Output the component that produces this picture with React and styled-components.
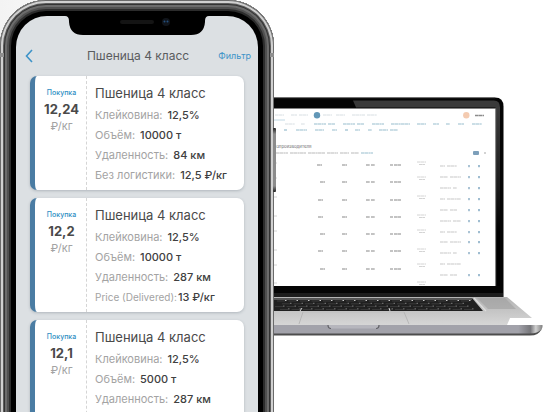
import React from "react";
import styled, { createGlobalStyle } from "styled-components";

const GlobalStyle = createGlobalStyle`
  * { box-sizing: border-box; }
  body {
    margin: 0;
    background: #ffffff;
    font-family: Inter, "Noto Sans", sans-serif;
    color: #4a4a4a;
  }
`;

const Scene = styled.main`
  display: flex;
  align-items: flex-start;
  height: 100vh;
  overflow: hidden;
  background: linear-gradient(90deg, #f3f3f3 0, #ffffff 120px);
`;

const Phone = styled.section`
  position: relative;
  flex: 0 0 274px;
  padding: 16px 16px 0;
  min-height: 120vh;
  border-radius: 46px 46px 0 0;
  background: #000;
  box-shadow:
    inset 0 0 0 1px #6a6a6a,
    inset 0 0 0 3px #d0d0d0,
    inset 0 0 0 4px #5d5d5d,
    inset 0 0 0 5px #333333,
    inset 0 0 0 7px #6c6c6c,
    inset 0 0 0 9px #505050,
    inset 0 0 0 11px #2c2c2c;
`;

const SideKey = styled.span`
  position: absolute;
  top: 128px;
  right: -2px;
  width: 3px;
  height: 64px;
  border-radius: 1px;
  background: linear-gradient(#222 0, #8c8c8c 6px, #8c8c8c 58px, #222 100%);
`;

const Antenna = styled.span`
  position: absolute;
  top: 53px;
  left: ${(p) => (p.$right ? "auto" : 0)};
  right: ${(p) => (p.$right ? 0 : "auto")};
  width: 4px;
  height: 4px;
  background: #8f8f8f;
`;

const Screen = styled.div`
  min-height: 110vh;
  border-radius: 31px 31px 0 0;
  background: #dce0e3;
`;

const Notch = styled.svg`
  display: block;
  width: 144px;
  height: 20px;
  margin: 0 auto;
`;

const NavBar = styled.header`
  display: grid;
  grid-template-columns: 1fr auto 1fr;
  align-items: center;
  height: 40px;
  padding: 0 7px 0 9px;
`;

const BackButton = styled.button`
  display: flex;
  justify-self: start;
  padding: 0;
  border: 0;
  background: none;
  color: #3d93c8;
  cursor: pointer;
`;

const NavTitle = styled.h1`
  margin: 0;
  font-size: 12px;
  line-height: 16px;
  font-weight: 400;
  color: #5a5c5e;
  white-space: nowrap;
`;

const FilterButton = styled.button`
  justify-self: end;
  padding: 0;
  border: 0;
  background: none;
  color: #3d93c8;
  font: 400 9px/16px Inter, sans-serif;
  cursor: pointer;
`;

const OfferList = styled.div`
  display: grid;
  gap: 8px;
  padding: 0 14px;
`;

const OfferCard = styled.article`
  display: grid;
  grid-template-columns: 52px 1fr;
  min-height: 114px;
  overflow: hidden;
  border-left: 5px solid #4a7ca3;
  border-radius: 7px;
  background: #ffffff;
  box-shadow: 0 1px 3px rgba(60, 75, 90, 0.28);
`;

const PriceColumn = styled.div`
  display: flex;
  flex-direction: column;
  align-items: center;
  padding: 11px 0 0 2px;
  border-right: 1px dashed #d5d5d5;
`;

const DealType = styled.span`
  font-size: 7px;
  line-height: 12px;
  font-weight: 500;
  color: #2f8fc4;
`;

const Price = styled.strong`
  font-size: 13px;
  line-height: 20px;
  font-weight: 700;
`;

const Unit = styled.span`
  font-size: 11px;
  line-height: 14px;
  color: #a3a3a3;
`;

const Details = styled.div`
  padding: 8px 0 0 8px;
`;

const CardTitle = styled.h2`
  margin: 0 0 3px;
  font-size: 13px;
  line-height: 18px;
  font-weight: 400;
  white-space: nowrap;
`;

const Facts = styled.dl`
  display: grid;
  grid-auto-rows: 20px;
  margin: 0;
`;

const Fact = styled.div`
  display: flex;
  align-items: center;
  gap: ${(p) => (p.$tight ? 1 : 5)}px;
  font-size: 11px;
  line-height: 18px;
  white-space: nowrap;
`;

const FactName = styled.dt`
  font-size: ${(p) => (p.$tight ? 10 : 11)}px;
  color: #a3a3a3;
`;

const FactValue = styled.dd`
  margin: 0;
  font-weight: 500;
  color: #404040;
`;

const Laptop = styled.svg`
  display: block;
  flex: 0 1 269px;
  min-width: 0;
  margin-top: 97px;
`;

const offers = [
  {
    price: "12,24",
    facts: [
      ["Клейковина:", "12,5%"],
      ["Объём:", "10000 т"],
      ["Удаленность:", "84 км"],
      ["Без логистики:", "12,5 ₽/кг"],
    ],
  },
  {
    price: "12,2",
    facts: [
      ["Клейковина:", "12,5%"],
      ["Объём:", "10000 т"],
      ["Удаленность:", "287 км"],
      ["Price (Delivered):", "13 ₽/кг", true],
    ],
  },
  {
    price: "12,1",
    facts: [
      ["Клейковина:", "12,5%"],
      ["Объём:", "5000 т"],
      ["Удаленность:", "287 км"],
    ],
  },
];

function Offer({ offer }) {
  return (
    <OfferCard>
      <PriceColumn>
        <DealType>Покупка</DealType>
        <Price>{offer.price}</Price>
        <Unit>₽/кг</Unit>
      </PriceColumn>
      <Details>
        <CardTitle>Пшеница 4 класс</CardTitle>
        <Facts>
          {offer.facts.map(([name, value, tight]) => (
            <Fact key={name} $tight={tight}>
              <FactName $tight={tight}>{name}</FactName>
              <FactValue>{value}</FactValue>
            </Fact>
          ))}
        </Facts>
      </Details>
    </OfferCard>
  );
}

const greyMarks = [
  [275, 284, 115], [291, 297, 115], [299, 308, 115], [323, 332, 115], [336, 345, 115],
  [352, 365, 115], [367, 377, 115], [285, 295, 124], [301, 305, 124],
];
const blueMarks = [
  [314, 326, 124], [328, 335, 124], [343, 355, 124], [357, 364, 124], [372, 384, 124],
  [391, 410, 124], [417, 426, 124], [433, 439, 124], [446, 450, 124], [458, 464, 124],
  [472, 482, 124], [284, 287, 130], [296, 307, 130], [315, 324, 130], [332, 337, 130],
  [345, 348, 130], [355, 360, 130], [368, 372, 130], [379, 388, 130], [390, 398, 130],
  [361, 373, 153],
];
const captionMarks = [
  [276, 288, 153], [290, 306, 153], [308, 325, 153], [327, 338, 153], [340, 349, 153], [351, 359, 153],
];
const tableRows = [
  [165, 317, 342], [182, 320, 342], [200, 318, 342], [217, 318, 342],
  [234, 320, 342], [251, 318, 342], [269, 320, 342],
];
const pairRows = [163, 178, 197, 216, 231, 250, 265, 283];
const actionRows = [166, 177, 188, 199, 210, 221, 232, 242, 253, 264, 275];

function Marks({ items, color, thickness = 1.2 }) {
  return (
    <g stroke={color} strokeWidth={thickness} strokeDasharray="3 0.3 4 0.4 2 0.3">
      {items.map(([x1, x2, y]) => (
        <line key={`${x1}-${y}`} x1={x1} x2={x2} y1={y} y2={y} />
      ))}
    </g>
  );
}

function LaptopDrawing() {
  const keys = [];
  for (let row = 0; row < 4; row += 1) {
    for (let i = 0; i < 18; i += 1) {
      const x = 277 + i * 11.5 + (row % 2) * 6 - row;
      if (x < 463 + row * 3) keys.push([x, 301 + row * 2.8, row]);
    }
  }
  return (
    <Laptop viewBox="274 97 269 240" role="img" aria-label="Ноутбук с таблицей предложений">
      <defs>
        <linearGradient id="sideBezel" x1="0" y1="0" x2="0" y2="1">
          <stop offset="0" stopColor="#3b3b3b" />
          <stop offset="0.45" stopColor="#1c1c1c" />
          <stop offset="0.7" stopColor="#000" />
        </linearGradient>
        <linearGradient id="deck" x1="0" y1="0" x2="0" y2="1">
          <stop offset="0" stopColor="#b4b4b4" />
          <stop offset="1" stopColor="#d6d6d6" />
        </linearGradient>
        <linearGradient id="lip" x1="0" y1="0" x2="1" y2="0">
          <stop offset="0" stopColor="#a2a2aa" />
          <stop offset="0.91" stopColor="#a2a2aa" />
          <stop offset="0.955" stopColor="#77777b" />
          <stop offset="0.975" stopColor="#d0d0d0" />
          <stop offset="1" stopColor="#808080" />
        </linearGradient>
      </defs>

      <path d="M274 97.5H495q8.5 0 8.5 9V298H274Z" fill="#050505" />
      <path d="M274 97.7H495" stroke="#666" strokeWidth="0.7" />
      <path d="M353 100.5H494q6 0 6 7H356Z" fill="#3a3a3a" />
      <rect x="495.5" y="107" width="4.5" height="179" fill="url(#sideBezel)" />
      <rect x="274" y="108.5" width="221.5" height="177.5" fill="#fff" />
      <path d="M495.7 108.5V286" stroke="#858585" strokeWidth="0.7" />
      <rect x="274" y="293" width="229" height="4" fill="#1d1d1d" />

      <Marks items={greyMarks} color="#d3dadf" thickness={0.9} />
      <Marks items={blueMarks} color="#98bdce" />
      <Marks items={captionMarks} color="#b9b9b9" />
      <path d="M274 120H285" stroke="#b0cedd" strokeWidth="0.8" />
      <circle cx="317" cy="115.3" r="3.2" fill="#6297b7" />
      <circle cx="466.3" cy="115.3" r="3.2" fill="#f4cbb1" />
      <Marks items={[[475, 484, 115.5]]} color="#8b8b8b" thickness={1.5} />
      <text x="274" y="147.5" fontFamily="Inter, sans-serif" fontSize="4.4" fill="#707070">озпроизводителя</text>
      <rect x="473" y="151" width="6" height="4" rx="1" fill="#7d9fba" />
      <rect x="484" y="152" width="2" height="2" fill="#d3d3d3" />

      {tableRows.map(([y, a, b]) => (
        <Marks
          key={y}
          items={[[a, a + 5, y], [b, b + 5, y], [366, 370, y], [371, 375, y], [390, 393, y], [394, 401, y]]}
          color="#b0b0b0"
          thickness={1.5}
        />
      ))}
      {pairRows.map((y) => (
        <Marks
          key={y}
          items={[[274, 277, y], [417, 426, y - 1], [419, 425, y + 1.5]]}
          color="#cfcfcf"
          thickness={0.9}
        />
      ))}
      {actionRows.map((y, i) => (
        <g key={y}>
          <Marks items={[[440, 445 + (i % 3) * 3, y], [447 + (i % 3) * 3, 457 + (i % 2) * 4, y]]} color="#c8c8c8" thickness={1.1} />
          {i !== 9 && <rect x="468" y={y - 1} width="2" height="2.2" fill="#abc4d5" />}
          {i !== 9 && <rect x="478" y={y - 1} width="2" height="2.2" fill="#9fbdd1" />}
        </g>
      ))}

      <path d="M274 297H507L532 318H510L507 325H274Z" fill="url(#deck)" />
      <path d="M274 298H472L483 311H274Z" fill="#202020" />
      <path d="M274 299H472" stroke="#8d8d8d" strokeWidth="1" />
      {keys.map(([x, y, row]) => (
        <g key={`${x}-${y}`}>
          <path d={`M${x} ${y}h8`} stroke="#3b3b3b" strokeWidth="1" />
          <rect x={x + 8} y={y - 1} width="1.5" height="1" fill={row === 0 ? "#c8c8c8" : "#7e7e7e"} />
        </g>
      ))}
      <path d="M474 298L486 311" stroke="#dedede" strokeWidth="1.2" />
      <path d="M477 298H505L516 309H488Z" fill="#9d9d9d" opacity="0.55" />
      <path d="M302 308l-2 3M389 308l1 3" stroke="#d8d8d8" strokeWidth="1" />
      <path d="M303 312l-4 12M404 312l5 12" stroke="#b0b0b0" strokeWidth="0.8" />
      <path d="M303 312H404" stroke="#bcbcbc" strokeWidth="0.6" />
      <path d="M274 325H542.5v2q-1 6-9 7H274Z" fill="url(#lip)" />
      <path d="M274 333.5H530q8 0 11-4q-2 6-11 6H274Z" fill="#4d4d4d" />
      <path d="M328 325H379q0 3.5-3 3.5H331q-3 0-3-3.5Z" fill="#b6b6bd" />
      <path d="M328 325q0 3.5 3 3.5M379 325q0 3.5-3 3.5" stroke="#616166" strokeWidth="1.2" fill="none" />
    </Laptop>
  );
}

export default function App() {
  return (
    <>
      <GlobalStyle />
      <Scene>
        <Phone>
          <Antenna />
          <Antenna $right />
          <SideKey />
          <Screen>
            <Notch viewBox="0 0 144 20" aria-hidden="true">
              <path d="M0 0H144Q140 0 140 5V6Q139 19 126 19H18Q5 19 4 6V5Q4 0 0 0Z" fill="#000" />
              <rect x="55" y="4" width="34" height="4" rx="2" fill="#141414" />
              <circle cx="101" cy="6" r="4" fill="#10141a" />
              <circle cx="99.5" cy="5.5" r="1" fill="#234f7d" />
              <circle cx="102.5" cy="5.5" r="1" fill="#234f7d" />
            </Notch>
            <NavBar>
              <BackButton aria-label="Назад">
                <svg width="8" height="14" viewBox="0 0 8 14" fill="none" stroke="currentColor" strokeWidth="1.6">
                  <path d="M7 1L1.5 7L7 13" />
                </svg>
              </BackButton>
              <NavTitle>Пшеница 4 класс</NavTitle>
              <FilterButton>Фильтр</FilterButton>
            </NavBar>
            <OfferList>
              {offers.map((offer) => (
                <Offer key={offer.price} offer={offer} />
              ))}
            </OfferList>
          </Screen>
        </Phone>
        <LaptopDrawing />
      </Scene>
    </>
  );
}
